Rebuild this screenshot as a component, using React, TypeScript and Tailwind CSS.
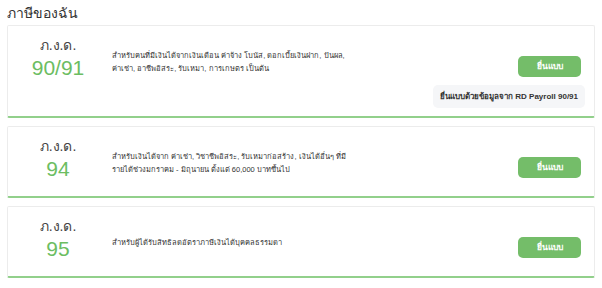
const forms = [
  {
    code: "90/91",
    lines: [
      "สำหรับคนที่มีเงินได้จากเงินเดือน ค่าจ้าง โบนัส, ดอกเบี้ยเงินฝาก, ปันผล,",
      "ค่าเช่า, อาชีพอิสระ, รับเหมา, การเกษตร เป็นต้น",
    ],
    payroll: true,
  },
  {
    code: "94",
    lines: [
      "สำหรับเงินได้จาก ค่าเช่า, วิชาชีพอิสระ, รับเหมาก่อสร้าง, เงินได้อื่นๆ ที่มี",
      "รายได้ช่วงมกราคม - มิถุนายน ตั้งแต่ 60,000 บาทขึ้นไป",
    ],
    payroll: false,
  },
  {
    code: "95",
    lines: ["สำหรับผู้ได้รับสิทธิลดอัตราภาษีเงินได้บุคคลธรรมดา"],
    payroll: false,
  },
];

export default function App() {
  return (
    <div className="w-[602px] h-[288px] bg-white px-[7px] pt-[4px] font-['Liberation_Sans','Noto_Sans',sans-serif] text-[#333]">
      <h1 className="text-[14px] leading-[18px] mb-[3px]">ภาษีของฉัน</h1>

      <div className="flex flex-col gap-[8px] w-[588px]">
        {forms.map((f) => (
          <div
            key={f.code}
            className={`bg-white border border-[#ececec] border-b-2 border-b-[#92d08b] rounded-[2px] pt-[10px] pr-[13px] ${
              f.payroll ? "h-[93px]" : "h-[72px]"
            }`}
          >
            <div className="flex items-start">
              <div className="w-[100px] flex flex-col items-center shrink-0">
                <div className="text-[14px] leading-[18px] text-[#444]">ภ.ง.ด.</div>
                <div className="text-[21px] leading-[26px] text-[#6cbd62] mt-[1px]">{f.code}</div>
              </div>
              <div className="flex-1 pl-[4px] self-center pt-[6px] text-[7.5px] leading-[13px] text-[#333]">
                {f.lines.map((l) => (
                  <div key={l}>{l}</div>
                ))}
              </div>
              <button className="mt-[20px] w-[63px] h-[21px] rounded-[5px] bg-[#74bd69] text-white text-[8.5px] font-semibold">
                ยื่นแบบ
              </button>
            </div>
            {f.payroll && (
              <div className="flex justify-end -mr-[4px] mt-[4px]">
                <div className="h-[23px] px-[7px] flex items-center rounded-[5px] bg-[#f5f6f8] text-[8px] font-semibold text-[#333]">
                  ยื่นแบบด้วยข้อมูลจาก RD Payroll 90/91
                </div>
              </div>
            )}
          </div>
        ))}
      </div>
    </div>
  );
}
